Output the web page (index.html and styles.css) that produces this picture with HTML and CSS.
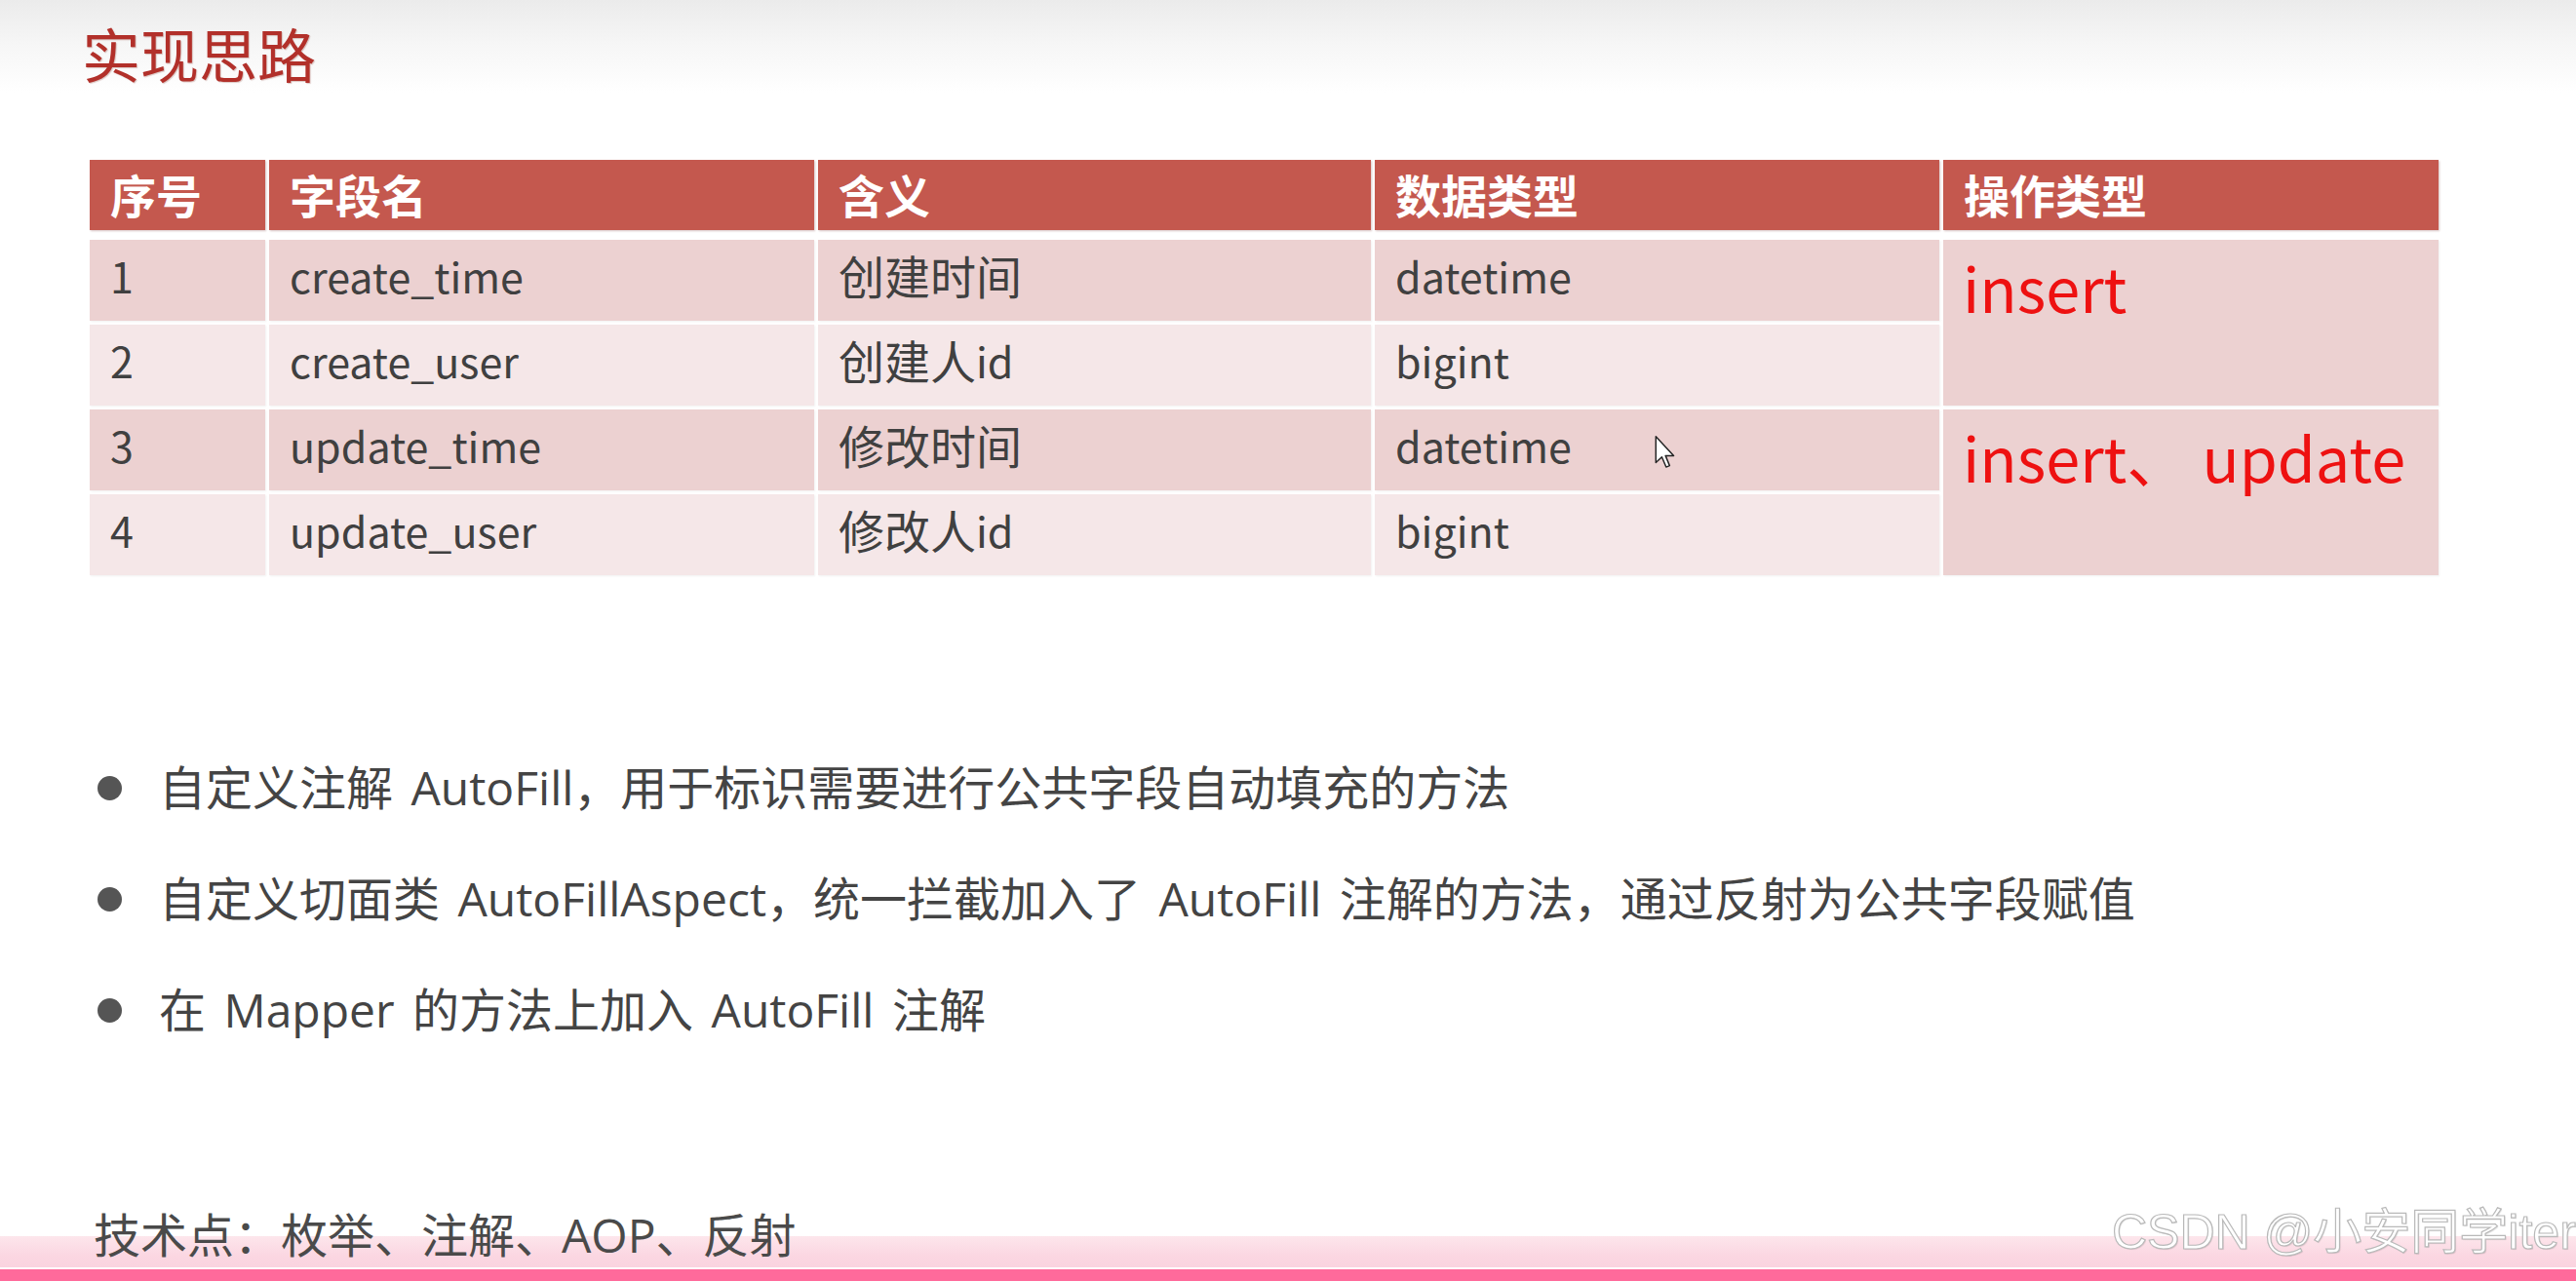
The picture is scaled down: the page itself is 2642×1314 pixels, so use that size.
FILE: index.html
```html
<!DOCTYPE html>
<html lang="zh-CN">
<head>
<meta charset="utf-8">
<title>实现思路</title>
<link rel="stylesheet" href="styles.css">
</head>
<body>
<div class="slide">
  <h1 class="title">实现思路</h1>

  <div class="grid">
    <div class="th">序号</div>
    <div class="th">字段名</div>
    <div class="th">含义</div>
    <div class="th">数据类型</div>
    <div class="th">操作类型</div>

    <div class="td b1"><span class="en">1</span></div>
    <div class="td b1"><span class="en">create_time</span></div>
    <div class="td b1">创建时间</div>
    <div class="td b1"><span class="en">datetime</span></div>
    <div class="td op span2">insert</div>

    <div class="td b2"><span class="en">2</span></div>
    <div class="td b2"><span class="en">create_user</span></div>
    <div class="td b2">创建人<span class="en">id</span></div>
    <div class="td b2"><span class="en">bigint</span></div>

    <div class="td b1"><span class="en">3</span></div>
    <div class="td b1"><span class="en">update_time</span></div>
    <div class="td b1">修改时间</div>
    <div class="td b1"><span class="en">datetime</span></div>
    <div class="td op span2">insert、 update</div>

    <div class="td b2"><span class="en">4</span></div>
    <div class="td b2"><span class="en">update_user</span></div>
    <div class="td b2">修改人<span class="en">id</span></div>
    <div class="td b2"><span class="en">bigint</span></div>
  </div>

  <ul class="points">
    <li><span class="dot"></span><span>自定义注解 AutoFill，用于标识需要进行公共字段自动填充的方法</span></li>
    <li><span class="dot"></span><span>自定义切面类 AutoFillAspect，统一拦截加入了 AutoFill 注解的方法，通过反射为公共字段赋值</span></li>
    <li><span class="dot"></span><span>在 Mapper 的方法上加入 AutoFill 注解</span></li>
  </ul>

  <p class="tech">技术点：枚举、注解、AOP、反射</p>

  <div class="watermark">CSDN @小安同学iter</div>

  <svg class="cursor" viewBox="0 0 13 21" width="22" height="34" aria-hidden="true">
    <path d="M0.5 0.5 L0.5 17 L4.3 13.4 L7 19.8 L9.2 18.9 L6.6 12.6 L11.8 12.6 Z" fill="#fff" stroke="#222" stroke-width="0.9" stroke-linejoin="round"/>
  </svg>
</div>
</body>
</html>
```

FILE: styles.css
```css
html, body {
  margin: 0;
  padding: 0;
  background: #fff;
}

.slide {
  position: relative;
  width: 2642px;
  height: 1314px;
  overflow: hidden;
  font-family: "Noto Sans CJK SC", "Noto Sans", sans-serif;
  color: #404040;
  display: flex;
  flex-direction: column;
  background:
    linear-gradient(#ff6a9b, #ff6a9b) left bottom / 100% 12px no-repeat,
    linear-gradient(#ffffff, #ffffff) left bottom 12px / 100% 2px no-repeat,
    linear-gradient(to bottom, #fde6ec 0%, #fbd7e2 60%, #fad3df 100%) left bottom 14px / 100% 32px no-repeat,
    linear-gradient(to bottom, #ebebeb 0px, #f6f6f6 45px, #ffffff 95px);
}

.title {
  margin: 24px 0 0 84px;
  font-size: 60px;
  line-height: 60px;
  font-weight: 400;
  color: #b2302a;
  text-shadow: 1px 1px 1px rgba(120, 30, 20, 0.25);
}

.grid {
  margin: 80px 0 0 92px;
  display: grid;
  grid-template-columns: 180px 559px 567px 579px 508px;
  grid-template-rows: 78px repeat(4, 83px);
  gap: 4px;
  width: max-content;
}

.th {
  margin-bottom: 6px;
  background: #c4584e;
  color: #fff;
  font-size: 47px;
  font-weight: 700;
  display: flex;
  align-items: center;
  padding-left: 21px;
  padding-bottom: 4px;
  box-shadow: 1px 1px 2px rgba(90, 20, 20, 0.25);
}

.td {
  display: flex;
  align-items: center;
  padding-left: 21px;
  padding-bottom: 10px;
  font-size: 47px;
  line-height: 1.2;
  color: #404040;
  box-shadow: 1px 1px 2px rgba(0, 0, 0, 0.06);
}

.en {
  font-size: 43px;
}

.b1 {
  background: #ecd1d1;
}

.b2 {
  background: #f5e7e8;
}

.op {
  background: #ecd1d1;
  align-items: flex-start;
  padding-top: 10px;
  padding-bottom: 0;
  padding-left: 20px;
  font-size: 63px;
  line-height: 1.2;
  color: #ee1111;
  white-space: nowrap;
}

.span2 {
  grid-row: span 2;
}

.points {
  list-style: none;
  margin: 189px 0 0 0;
  padding: 0 0 0 100px;
  display: flex;
  flex-direction: column;
  gap: 56px;
  font-family: "Open Sans", "Noto Sans CJK SC", sans-serif;
}

.points li {
  display: flex;
  align-items: center;
  gap: 38px;
  font-size: 48px;
  line-height: 58px;
  word-spacing: 6px;
  color: #444;
}

.dot {
  width: 25px;
  height: 25px;
  border-radius: 50%;
  background: #555;
  flex: none;
}

.tech {
  margin: 173px 0 0 96px;
  font-family: "Open Sans", "Noto Sans CJK SC", sans-serif;
  font-size: 48px;
  line-height: 58px;
  color: #4a4a4a;
}

.watermark {
  position: absolute;
  left: 2166px;
  top: 1234px;
  font-family: "Liberation Sans", "Noto Sans CJK SC", sans-serif;
  font-size: 50px;
  line-height: 60px;
  white-space: nowrap;
  color: #ffffff;
  -webkit-text-stroke: 1.2px #b9b9b9;
  text-shadow: 1px 1px 1px rgba(0, 0, 0, 0.12);
}

.cursor {
  position: absolute;
  left: 1697px;
  top: 447px;
}
```
